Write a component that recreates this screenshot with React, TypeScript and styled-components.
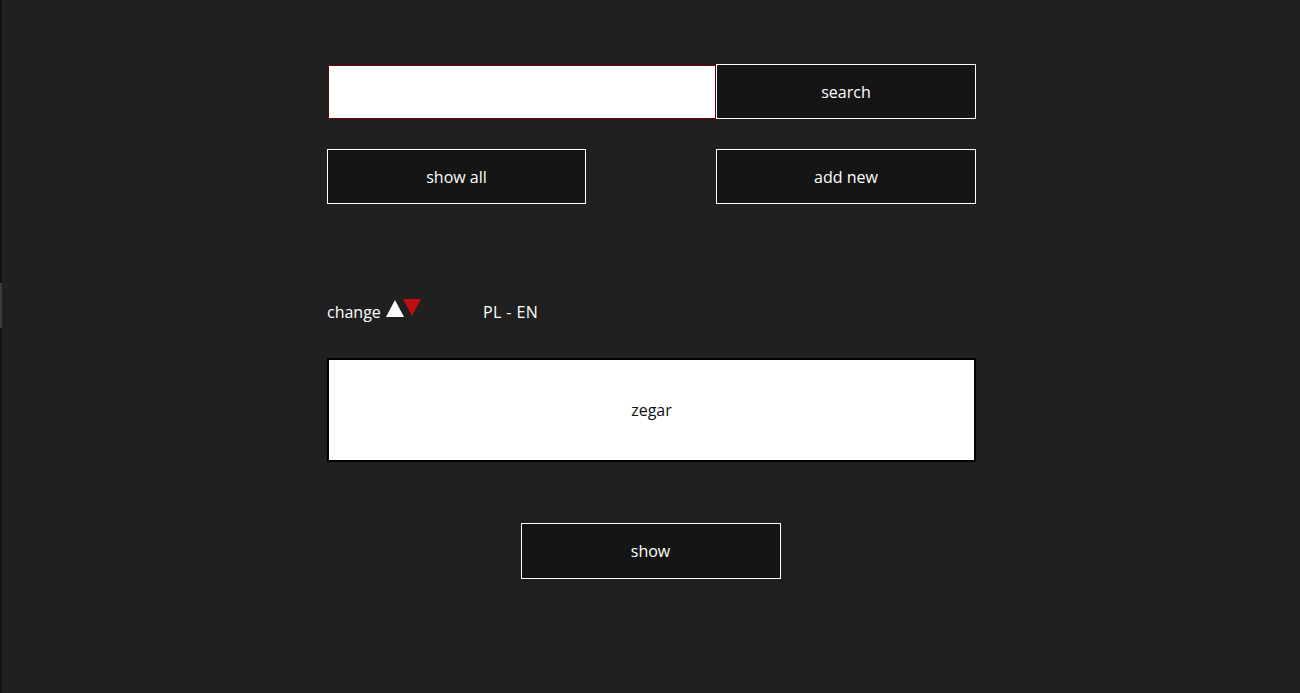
import React from "react";
import styled, { createGlobalStyle } from "styled-components";

const Global = createGlobalStyle`
  html, body { margin: 0; padding: 0; background: #202020; }
  body { font-family: "Open Sans", "Noto Sans", sans-serif; color: #fff; min-height: 693px; }
`;

const EdgeStrip = styled.div`
  position: fixed;
  left: 0;
  top: 0;
  width: 2px;
  height: 100vh;
  background: linear-gradient(#111 0, #111 283px, #3b3b3b 283px, #3b3b3b 328px, #141414 328px);
`;

const Page = styled.main`
  width: 649px;
  margin-left: calc(50% - 323px);
  padding-top: 64px;
  display: flex;
  flex-direction: column;
`;

const SearchRow = styled.div`
  display: grid;
  grid-template-columns: 389px 260px;
  align-items: start;
`;

const SearchInput = styled.input`
  box-sizing: border-box;
  margin: 1px 0 0 1px;
  width: 388px;
  height: 54px;
  border: 1px solid #6e0000;
  background: #fff;
  outline: none;
  padding: 0 10px;
  font: inherit;
`;

const Button = styled.button<{ $w?: number; $h?: number }>`
  box-sizing: border-box;
  width: ${(p) => p.$w ?? 260}px;
  height: ${(p) => p.$h ?? 55}px;
  background: #151515;
  border: 1px solid #fff;
  color: #fff;
  font-family: "Open Sans", "Noto Sans", sans-serif;
  font-size: 16px;
  cursor: pointer;
  padding: 0;
`;

const ActionRow = styled.div`
  display: flex;
  justify-content: space-between;
  margin-top: 30px;
`;

const LangRow = styled.div`
  display: flex;
  align-items: center;
  margin-top: 96px;
  height: 24px;
  line-height: 24px;
  font-size: 16px;
`;

const ChangeLabel = styled.span`
  display: inline-flex;
  align-items: center;
  width: 156px;
`;

const Tri = styled.span<{ $up?: boolean }>`
  display: inline-block;
  width: 0;
  height: 0;
  border-left: 9px solid transparent;
  border-right: 9px solid transparent;
  ${(p) =>
    p.$up
      ? `border-bottom: 17px solid #fff; margin-left: 5px; transform: translateY(-4px);`
      : `border-top: 17px solid #c00e0e; margin-left: -1px; transform: translateY(-5px);`}
`;

const Lang = styled.span`
  letter-spacing: 0.4px;
`;

const WordBox = styled.div`
  box-sizing: border-box;
  margin-top: 34px;
  width: 649px;
  height: 104px;
  border: 2px solid #000;
  background: #fff;
  color: #111;
  display: flex;
  align-items: center;
  justify-content: center;
  font-size: 16px;
`;

const ShowWrap = styled.div`
  display: flex;
  justify-content: center;
  margin-top: 61px;
  padding-right: 2px;
`;

export default function App() {
  return (
    <>
      <Global />
      <EdgeStrip />
      <Page>
        <SearchRow>
          <SearchInput />
          <Button>search</Button>
        </SearchRow>
        <ActionRow>
          <Button $w={259}>show all</Button>
          <Button>add new</Button>
        </ActionRow>
        <LangRow>
          <ChangeLabel>
            change
            <Tri $up />
            <Tri />
          </ChangeLabel>
          <Lang>PL - EN</Lang>
        </LangRow>
        <WordBox>zegar</WordBox>
        <ShowWrap>
          <Button $h={56}>show</Button>
        </ShowWrap>
      </Page>
    </>
  );
}
